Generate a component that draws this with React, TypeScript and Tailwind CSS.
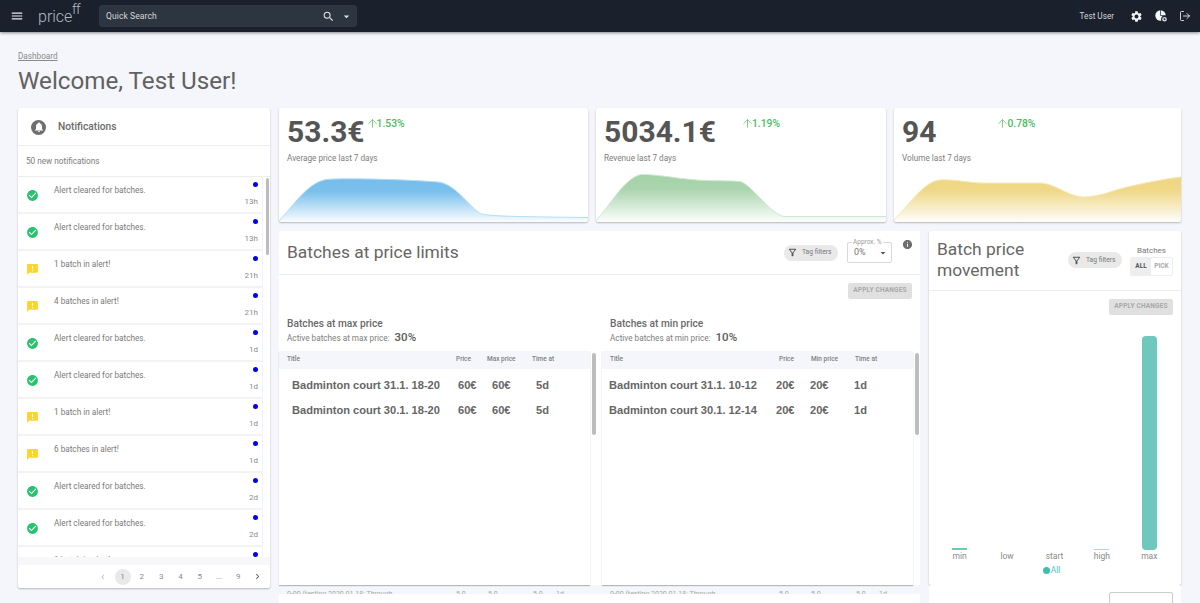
import React from "react";
import {
  MdMenu, MdSearch, MdArrowDropDown, MdSettings, MdCheckCircle, MdAnnouncement,
  MdNotifications, MdInfo, MdChevronLeft, MdChevronRight, MdOutlineFilterAlt,
} from "react-icons/md";
import { ArrowUp, LogOut } from "lucide-react";

function PieIcon() {
  return (
    <svg width="14" height="14" viewBox="0 0 14 14" fill="none">
      <circle cx="6.5" cy="6.5" r="5.2" fill="#f4f5f6" />
      <path d="M6.5 6.5V1M6.5 6.5H12" stroke="#1a212d" strokeWidth="0.7" />
      <circle cx="10.5" cy="10.2" r="3.4" fill="#1a212d" />
      <circle cx="10.5" cy="10.2" r="2.3" fill="#d9dbde" />
      <circle cx="10.5" cy="10.2" r="0.9" fill="#1a212d" />
    </svg>
  );
}

function Header() {
  return (
    <header className="h-8 shrink-0 bg-[#1a212d] shadow-[0_1px_3px_rgba(0,0,0,0.45)] flex items-center relative z-10 text-white">
      <MdMenu className="ml-[10px] text-[#eceef0]" size={14} />
      <div className="ml-[14px] w-[46px] flex items-start text-[#b5b9be] h-8 pt-[3px] font-light">
        <span className="text-[16px] leading-[27px] font-light">price</span>
        <span className="text-[14px] leading-[12px] font-light -ml-[0.5px] tracking-[-0.5px]">ff</span>
      </div>
      <div className="ml-[15px] w-[258px] h-[22px] rounded-[3px] bg-[#2d3540] flex items-center pl-[7px] pr-[4px]">
        <span className="text-[8.5px] text-[#d5d8db] flex-1 tracking-[0.1px]">Quick Search</span>
        <MdSearch size={13} className="text-[#dfe1e4]" />
        <MdArrowDropDown size={13} className="ml-[5px] text-[#dfe1e4]" />
      </div>
      <div className="flex-1" />
      <span className="text-[8.2px] text-[#d4d7da]">Test User</span>
      <MdSettings size={13} className="ml-[16px] text-[#f4f5f6]" />
      <span className="ml-[11px]"><PieIcon /></span>
      <LogOut size={12} strokeWidth={1.8} className="ml-[11px] mr-[9px] text-[#e8eaec]" />
    </header>
  );
}

type Note = { k: "ok" | "warn"; t: string; a: string };
const notes: Note[] = [
  { k: "ok", t: "Alert cleared for batches.", a: "13h" },
  { k: "ok", t: "Alert cleared for batches.", a: "13h" },
  { k: "warn", t: "1 batch in alert!", a: "21h" },
  { k: "warn", t: "4 batches in alert!", a: "21h" },
  { k: "ok", t: "Alert cleared for batches.", a: "1d" },
  { k: "ok", t: "Alert cleared for batches.", a: "1d" },
  { k: "warn", t: "1 batch in alert!", a: "1d" },
  { k: "warn", t: "6 batches in alert!", a: "1d" },
  { k: "ok", t: "Alert cleared for batches.", a: "2d" },
  { k: "ok", t: "Alert cleared for batches.", a: "2d" },
  { k: "warn", t: "1 batch in alert!", a: "2d" },
];

function NotificationRow({ n }: { n: Note }) {
  return (
    <div className="h-[37px] shrink-0 border-b-2 border-[#f2f3f5] flex relative">
      <div className="w-[36px] flex items-center pl-[8px] pt-[1px]">
        {n.k === "ok" ? (
          <MdCheckCircle size={13} className="text-[#27c36f]" />
        ) : (
          <MdAnnouncement size={13} className="text-[#fdd42f]" />
        )}
      </div>
      <div className="flex-1 text-[8.2px] text-[#7a7a7a] pt-[7.5px] leading-[10px]">{n.t}</div>
      <div className="flex flex-col items-end pr-[4px] pt-[5px]">
        <span className="w-[5px] h-[5px] rounded-full bg-[#0000f0]" />
        <span className="mt-[10px] text-[8px] leading-[10px] text-[#8a8a8a]">{n.a}</span>
      </div>
    </div>
  );
}

function Notifications() {
  const pages = ["1", "2", "3", "4", "5", "...", "9"];
  return (
    <section className="w-[252px] h-[480px] shrink-0 bg-white rounded-[2px] shadow-[0_1px_2px_rgba(0,0,0,0.25)] flex flex-col">
      <div className="h-[38px] shrink-0 border-b border-[#eceded] flex items-center pl-[13px] pt-[1px]">
        <span className="w-[15px] h-[15px] rounded-full bg-[#6e6e6e] flex items-center justify-center">
          <MdNotifications size={12} className="text-white" />
        </span>
        <span className="ml-[12px] text-[10.2px] font-medium text-[#6a6a6a]">Notifications</span>
      </div>
      <div className="h-[31px] shrink-0 border-b border-[#eceded] flex items-center pl-[8px] text-[8.2px] text-[#7d7d7d]">
        50 new notifications
      </div>
      <div className="h-[380px] shrink-0 flex overflow-hidden">
        <div className="w-[245px] shrink-0 flex flex-col overflow-hidden border-r border-[#f2f3f5]">
          {notes.map((n, i) => <NotificationRow key={i} n={n} />)}
        </div>
        <div className="flex-1 pl-[3px] pt-[1px]">
          <div className="w-[3px] h-[77px] rounded-[2px] bg-[#bdbdbd]" />
        </div>
      </div>
      <div className="h-[8px] shrink-0 bg-[#f8f8fa]" />
      <div className="flex-1 flex items-center justify-end pr-[7px]">
        <MdChevronLeft size={10} className="text-[#bbbbbb] mr-[5px]" />
        {pages.map((p, i) => (
          <span key={i} className="w-[19.3px] flex justify-center text-[8px] text-[#8a8a8a]">
            <span className={i === 0 ? "w-[16px] h-[16px] rounded-full bg-[#e9e9e9] flex items-center justify-center" : "h-[16px] flex items-center"}>{p}</span>
          </span>
        ))}
        <MdChevronRight size={11} className="text-[#666666] ml-[4px]" />
      </div>
    </section>
  );
}

function Kpi(props: {
  w: string; value: string; delta: string; label: string; deltaMl: string;
  gid: string; color: string; line: string; d: string; vw: number; vh: number; chartH: string;
}) {
  return (
    <section className={props.w + " h-[114px] shrink-0 bg-white rounded-[2px] shadow-[0_1px_2px_rgba(0,0,0,0.25)] flex flex-col overflow-hidden"}>
      <div className="flex items-start pl-[8px] pt-[4px] h-[40px] shrink-0">
        <span className="text-[30px] leading-[40px] font-bold text-[#555555]">{props.value}</span>
        <span className={props.deltaMl + " flex items-center mt-[5px] text-[#4cbb5f]"}>
          <ArrowUp size={13} strokeWidth={1.3} className="-mx-[1px] -mt-[2px]" />
          <span className="text-[10.3px] font-medium leading-[14px] -ml-[1px]">{props.delta}</span>
        </span>
      </div>
      <div className="pl-[8px] mt-[4px] text-[8.2px] leading-[12px] text-[#7d7d7d]">{props.label}</div>
      <div className="flex-1" />
      <svg className={props.chartH + " w-full block shrink-0"} viewBox={`0 0 ${props.vw} ${props.vh}`} preserveAspectRatio="none">
        <defs>
          <linearGradient id={props.gid} x1="0" y1="0" x2="0" y2="1">
            <stop offset="0" stopColor={props.color} stopOpacity="1" />
            <stop offset="0.3" stopColor={props.color} stopOpacity="0.95" />
            <stop offset="1" stopColor={props.color} stopOpacity="0.03" />
          </linearGradient>
        </defs>
        <path d={props.d + ` L${props.vw} ${props.vh} L0 ${props.vh} Z`} fill={`url(#${props.gid})`} />
        <path d={props.d} fill="none" stroke={props.line} strokeWidth="1" />
      </svg>
    </section>
  );
}

function TagFilters() {
  return (
    <span className="w-[54px] h-[16px] rounded-full bg-[#e9e9e9] flex items-center pl-[3px] shrink-0">
      <MdOutlineFilterAlt size={11} className="text-[#555555]" />
      <span className="ml-[4px] text-[6.7px] text-[#777777]">Tag filters</span>
    </span>
  );
}

function ApplyButton() {
  return (
    <span className="w-[64px] h-[16px] rounded-[2px] bg-[#e0e0e0] flex items-center justify-center text-[6.5px] font-bold tracking-[0.2px] text-[#a8a8a8]">
      APPLY CHANGES
    </span>
  );
}

function BatchTable(props: {
  title: string; active: string; pct: string; col: string;
  pad: string; headPad: string; rowPad: string; tableMl: string;
  headW: [string, string, string]; rowW: [string, string, string];
  rows: [string, string, string, string][]; width: string;
}) {
  return (
    <div className={props.width + " shrink-0 flex flex-col"}>
      <div className={props.pad + " h-[35px] shrink-0 pt-[1px]"}>
        <div className="text-[10.2px] leading-[14px] font-medium text-[#6a6a6a]">{props.title}</div>
        <div className="flex items-center h-[14px]">
          <span className="text-[8.2px] text-[#7d7d7d]">{props.active}</span>
          <span className="ml-[5px] text-[11.5px] font-medium text-[#5a5a5a]">{props.pct}</span>
        </div>
      </div>
      <div className="flex flex-1 min-h-0">
        <div className={props.tableMl + " flex-1 flex flex-col shadow-[0_1px_1px_rgba(0,0,0,0.25)]"}>
          <div className={props.headPad + " h-[18px] shrink-0 bg-[#f5f6fb] flex items-center text-[6.5px] font-medium text-[#808080]"}>
            <span className={props.headW[0]}>Title</span>
            <span className={props.headW[1]}>Price</span>
            <span className={props.headW[2]}>{props.col}</span>
            <span>Time at</span>
          </div>
          <div className={props.rowPad + " pt-[4px] font-['Liberation_Sans',Arial,sans-serif] font-bold text-[11.1px] text-[#666666]"}>
            {props.rows.map((r) => (
              <div key={r[0]} className="h-[25px] flex items-center whitespace-nowrap">
                <span className={props.rowW[0]}>{r[0]}</span>
                <span className={props.rowW[1]}>{r[1]}</span>
                <span className={props.rowW[2]}>{r[2]}</span>
                <span>{r[3]}</span>
              </div>
            ))}
          </div>
        </div>
        <div className="w-[7px] shrink-0 pt-[2px] pl-[2px]">
          <div className="w-[4px] h-[82px] rounded-[2px] bg-[#bdbdbd]" />
        </div>
      </div>
    </div>
  );
}

function Limits() {
  return (
    <section className="w-[641px] h-[354px] shrink-0 bg-white rounded-t-[2px] flex flex-col">
      <div className="h-[44px] shrink-0 border-b border-[#eceded] flex items-center pl-[8px]">
        <span className="text-[17.4px] text-[#666666] flex-1">Batches at price limits</span>
        <TagFilters />
        <div className="ml-[9px] w-[45px] h-[21px] rounded-[2px] border border-[#d8d8d8] relative flex items-center pl-[6px] text-[9px] text-[#777777]">
          <span className="absolute -top-[5px] left-[4px] bg-white px-[1px] text-[6.5px] leading-[8px] text-[#999999]">Approx. %</span>
          <span className="flex-1">0%</span>
          <MdArrowDropDown size={12} className="mr-[2px] text-[#555555]" />
        </div>
        <MdInfo size={11} className="ml-[10px] mr-[7px] mb-[16px] text-[#6e6e6e]" />
      </div>
      <div className="h-[34px] shrink-0 flex justify-end pr-[8px] pt-[8px]">
        <ApplyButton />
      </div>
      <div className="flex-1 flex min-h-0 pt-[7px]">
        <BatchTable
          width="w-[318px]" pad="pl-[8px]" tableMl="ml-0" headPad="pl-[8px]" rowPad="pl-[13px]"
          title="Batches at max price" active="Active batches at max price:" pct="30%" col="Max price"
          headW={["w-[169px]", "w-[31px]", "w-[45px]"]} rowW={["w-[166px]", "w-[34px]", "w-[44px]"]}
          rows={[
            ["Badminton court 31.1. 18-20", "60€", "60€", "5d"],
            ["Badminton court 30.1. 18-20", "60€", "60€", "5d"],
          ]}
        />
        <BatchTable
          width="w-[323px]" pad="pl-[13px]" tableMl="ml-[5px]" headPad="pl-[8px]" rowPad="pl-[7px]"
          title="Batches at min price" active="Active batches at min price:" pct="10%" col="Min price"
          headW={["w-[169px]", "w-[32px]", "w-[44px]"]} rowW={["w-[167px]", "w-[34px]", "w-[44px]"]}
          rows={[
            ["Badminton court 31.1. 10-12", "20€", "20€", "1d"],
            ["Badminton court 30.1. 12-14", "20€", "20€", "1d"],
          ]}
        />
      </div>
    </section>
  );
}

function Movement() {
  const bars = [
    { l: "min", c: "h-[2px] bg-[#6fc8bd]" },
    { l: "low", c: "h-0" },
    { l: "start", c: "h-0" },
    { l: "high", c: "h-px bg-[#a5dcd5]" },
    { l: "max", c: "h-[214px] rounded-[4px] bg-[#6fc8bd]" },
  ];
  return (
    <section className="w-[252px] h-[354px] shrink-0 bg-white rounded-[2px] shadow-[0_1px_2px_rgba(0,0,0,0.25)] flex flex-col">
      <div className="h-[60px] shrink-0 border-b border-[#eceded] flex items-center pl-[8px] pr-[8px]">
        <span className="flex-1 text-[17.4px] leading-[21px] -mt-[1px] text-[#666666]">Batch price<br />movement</span>
        <span className="mb-[1px]"><TagFilters /></span>
        <div className="ml-[8px] w-[43px] flex flex-col items-center">
          <span className="text-[8px] leading-[12px] text-[#777777]">Batches</span>
          <div className="w-[43px] h-[19px] rounded-[2px] border border-[#eeeeee] flex text-[6.5px] font-bold">
            <span className="w-[20px] bg-[#eeeeee] text-[#555555] flex items-center justify-center">ALL</span>
            <span className="flex-1 text-[#aaaaaa] flex items-center justify-center">PICK</span>
          </div>
        </div>
      </div>
      <div className="h-[24px] shrink-0 flex justify-end pr-[8px] pt-[8px]">
        <ApplyButton />
      </div>
      <div className="flex-1 flex flex-col min-h-0 pl-[7px] pr-[8px] items-stretch">
        <div className="flex-1 grid grid-cols-5 items-end">
          {bars.map((b) => (
            <div key={b.l} className="flex justify-center">
              <div className={"w-[15px] " + b.c} />
            </div>
          ))}
        </div>
        <div className="h-[13px] shrink-0 grid grid-cols-5 text-[8.5px] text-[#8a8a8a]">
          {bars.map((b) => (
            <span key={b.l} className="text-center leading-[13px]">{b.l}</span>
          ))}
        </div>
        <div className="h-[22px] shrink-0 flex items-start justify-center pt-[2px] pr-[6px]">
          <span className="w-[7px] h-[7px] rounded-full bg-[#3dbfae] mt-[2px]" />
          <span className="ml-[1px] text-[8.5px] leading-[11px] text-[#4cc7b6]">All</span>
        </div>
      </div>
    </section>
  );
}

function Peek() {
  const Line = ({ w, xs }: { w: string; xs: [string, string, string, string, string] }) => (
    <div className={w + " shrink-0 flex text-[7px] leading-[8px] text-[#a8a8a8]"}>
      {xs.map((t, i) => (
        <span key={i} className={["w-[169px]", "w-[32px]", "w-[45px]", "w-[23px]", ""][i]}>{t}</span>
      ))}
    </div>
  );
  return (
    <div className="h-[9px] flex overflow-hidden pl-[8px] pt-[5px] w-[641px]">
      <Line w="w-[323px]" xs={["0-00 (testing 2020.01.18: Through", "5.0", "5.0", "5.0", "1d"]} />
      <Line w="w-[300px]" xs={["0-00 (testing 2020.01.18: Through", "5.0", "5.0", "5.0", "1d"]} />
    </div>
  );
}

export default function App() {
  return (
    <div className="h-[603px] w-[1200px] overflow-hidden bg-[#f5f6fb] flex flex-col font-['Roboto',sans-serif]">
      <Header />
      <main className="pl-[18px] pr-[19px]">
        <div className="pt-[18px] h-[30px] text-[8.2px] leading-[12px] text-[#8a8a8a] underline">Dashboard</div>
        <h1 className="h-[46px] text-[24.2px] leading-[38px] text-[#616161]">Welcome, Test User!</h1>
        <div className="flex gap-[9px]">
          <Notifications />
          <div className="flex-1 flex flex-col">
            <div className="flex gap-[8px]">
              <Kpi
                w="w-[309px]" value="53.3€" delta="1.53%" label="Average price last 7 days" deltaMl="ml-[2px]"
                gid="g1" color="#74bdec" line="#b6dcf5" vw={309} vh={44} chartH="h-[44px]"
                d="M0 43 C14 28 28 5 47 1.5 C60 0 120 1 159 4 C175 6 185 22 199 34 C205 38 215 38.5 309 39.5"
              />
              <Kpi
                w="w-[290px]" value="5034.1€" delta="1.19%" label="Revenue last 7 days" deltaMl="ml-[26px]"
                gid="g2" color="#a5d2a8" line="#cfe7d0" vw={290} vh={48} chartH="h-[48px]"
                d="M0 46.5 C14 32 28 4 45 0.5 C60 0 90 6 110 6.5 C125 7 140 6.5 146 8 C160 16 175 40 188 42.5 L290 42.5"
              />
              <Kpi
                w="w-[287px]" value="94" delta="0.78%" label="Volume last 7 days" deltaMl="ml-[61px]"
                gid="g3" color="#efd682" line="#f6e7b5" vw={287} vh={46} chartH="h-[46px]"
                d="M0 44 C14 30 30 5 46 4 C60 3 75 7 89 7 L147 7 C162 8 175 21 190 21 C205 21 220 14 233 11 C250 7 270 3 287 1"
              />
            </div>
            <div className="flex gap-[9px] mt-[9px]">
              <Limits />
              <Movement />
            </div>
            <div className="flex gap-[9px]">
              <Peek />
            </div>
            <div className="flex gap-[9px]">
              <div className="w-[641px] h-[20px] shrink-0 bg-white" />
              <div className="w-[252px] shrink-0 h-[20px] mt-[-9px] bg-white flex justify-end pr-[8px] pt-[7px] rounded-[2px]">
                <span className="w-[64px] h-[16px] rounded-[2px] border border-[#cccccc]" />
              </div>
            </div>
          </div>
        </div>
      </main>
    </div>
  );
}
